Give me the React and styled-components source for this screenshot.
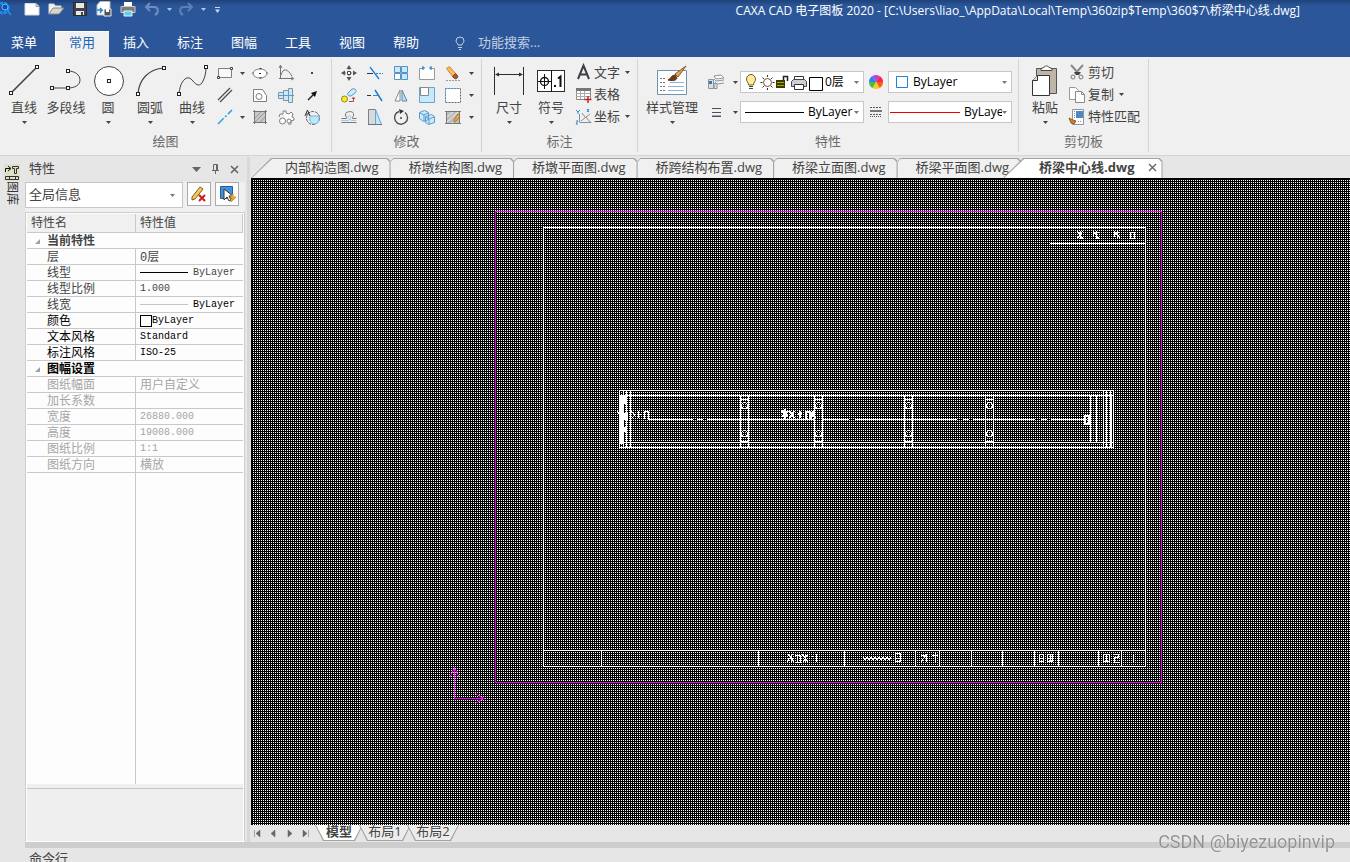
import React, { useState } from 'react'
import styled, { createGlobalStyle, css } from 'styled-components'

const GlobalStyle = createGlobalStyle`
	* {
		box-sizing: border-box;
	}

	body {
		margin: 0;
		background-color: #e6e6e6;
		font-family: 'Open Sans', 'Noto Sans CJK SC', sans-serif;
		font-size: 13px;
		color: #444;
		overflow: hidden;
	}

	button,
	input,
	select {
		font: inherit;
		color: inherit;
		border: none;
		padding: 0;
		margin: 0;
		background: none;
	}

	svg {
		display: block;
		flex: none;
	}
`

const Page = styled.div`
	display: flex;
	flex-direction: column;
	height: 100vh;
`

const TopBar = styled.header`
	background: linear-gradient(#1f4279, #2b579a 6px);
	color: #fff;
`

const TitleRow = styled.div`
	display: flex;
	justify-content: space-between;
	height: 31px;
	padding-right: 50px;
`

const QuickAccess = styled.div`
	display: flex;
	align-items: center;
	height: 18px;
`

const QuickButton = styled.button`
	display: flex;
	align-items: center;
	justify-content: center;
	width: ${({ $width }) => $width || 24}px;
	height: 18px;
`

const Title = styled.h1`
	margin: 0;
	font-size: 12px;
	font-weight: 400;
	line-height: 22px;
	white-space: nowrap;
`

const MenuRow = styled.nav`
	display: flex;
	height: 26px;
`

const MenuTab = styled.button`
	width: 54px;
	padding-bottom: 4px;
	line-height: 20px;
	text-align: center;

	&:first-child {
		width: 55px;
		padding-right: 7px;
	}

	${({ $active }) =>
		$active &&
		css`
			background-color: #f0f0f0;
			color: #1c66b8;
			box-shadow: inset 1px 1px #fff;
		`}
`

const Search = styled.label`
	display: flex;
	align-items: center;
	gap: 12px;
	padding: 0 0 2px 21px;
`

const SearchInput = styled.input`
	width: 120px;
	padding-bottom: 2px;
	outline: none;

	&::placeholder {
		color: #c2cfe3;
		opacity: 1;
	}
`

const Ribbon = styled.div`
	display: flex;
	padding: 2px 0 3px;
	background-color: #f0f0f0;
	border-bottom: 1px solid #d4d4d4;
`

const Group = styled.section`
	flex: none;
	width: ${({ $width }) => $width}px;
	padding-top: 3px;
	border-right: 1px solid #d4d4d4;
`

const GroupBody = styled.div`
	display: flex;
	height: 66px;
	padding-left: ${({ $left }) => $left}px;
`

const GroupTitle = styled.div`
	margin-top: 4px;
	line-height: 18px;
	padding-bottom: 2px;
	text-align: center;
	color: #6a6a6a;
`

const BigButton = styled.button`
	display: flex;
	flex-direction: column;
	align-items: center;
	width: ${({ $width }) => $width || 42}px;
	line-height: 18px;
	white-space: nowrap;

	svg:first-child {
		margin: 2px 0;
	}
`

const CaretBox = styled.span`
	display: flex;
	align-items: center;
	justify-content: center;
	height: 12px;
`

const ToolGrid = styled.div`
	display: grid;
	grid-template-columns: ${({ $columns }) => $columns};
	grid-auto-rows: 22px;
`

const ToolButton = styled.button`
	display: flex;
	align-items: center;
	justify-content: center;
`

const TextTools = styled.div`
	display: flex;
	flex-direction: column;
`

const TextTool = styled.button`
	display: flex;
	align-items: center;
	height: 22px;
	padding-bottom: 2px;
	line-height: 20px;
	white-space: nowrap;
`

const TextToolIcon = styled.span`
	display: flex;
	justify-content: center;
	width: 22px;
`

const TextToolCaret = styled.span`
	display: flex;
	justify-content: center;
	width: 14px;
`

const PropGrid = styled.div`
	display: grid;
	grid-template-columns: 28px 10px 124px 24px 124px;
	grid-auto-rows: 22px;
	row-gap: 8px;
	padding-top: 9px;
`

const SelectBox = styled.label`
	display: flex;
	align-items: center;
	padding: 0 4px 0 ${({ $left }) => $left || 4}px;
	background-color: #fff;
	border: 1px solid #c6c6c6;
	color: #000;
	font-size: 12px;
	overflow: hidden;
`

const Select = styled.select`
	appearance: none;
	flex: 1;
	min-width: 0;
	padding-left: ${({ $left }) => $left || 0}px;
	padding-bottom: 2px;
	height: 20px;
	outline: none;
	text-overflow: clip;
`

const Body = styled.div`
	display: flex;
	flex: 1;
	min-height: 0;
	padding-top: 1px;
`

const SideStrip = styled.aside`
	width: 25px;
	flex: none;
`

const SideTab = styled.button`
	display: flex;
	flex-direction: column;
	align-items: center;
	width: 24px;
	padding-top: 7px;
	font-size: 12px;
`

const SideTabText = styled.span`
	writing-mode: vertical-rl;
	text-orientation: sideways;
	line-height: 16px;
	color: #333;
`

const Panel = styled.aside`
	display: flex;
	flex-direction: column;
	flex: none;
	width: 220px;
`

const PanelHead = styled.div`
	display: flex;
	align-items: center;
	height: 25px;
	padding: 0 1px 4px 4px;
	line-height: 20px;
`

const PanelTitle = styled.h2`
	flex: 1;
	margin: 0;
	font-size: 13px;
	font-weight: 400;
`

const HeadButton = styled.button`
	display: flex;
	justify-content: center;
	width: 19px;
	padding-top: 2px;
`

const PanelTools = styled.div`
	display: flex;
	gap: 4px;
	height: 30px;
	padding-bottom: 4px;
	background-color: #f0f0f0;
`

const PanelSelect = styled.label`
	display: flex;
	align-items: center;
	flex: 1;
	padding: 0 7px 0 3px;
	background-color: #fff;
	border: 1px solid #c6c6c6;
`

const SquareButton = styled.button`
	display: flex;
	align-items: center;
	justify-content: center;
	width: 24px;
	height: 24px;
	border: 1px solid #ababab;
	background-color: #fdfdfd;

	&:last-child {
		margin-right: 6px;
	}
`

const PropertySheet = styled.div`
	display: flex;
	flex-direction: column;
	flex: 1;
	padding: 1px 1px 0;
	background-color: #fdfdfd;
	border: 1px solid #cfcfcf;
	border-bottom-color: #fff;
`

const PropTable = styled.table`
	width: 100%;
	table-layout: fixed;
	border-spacing: 0;
	font-family: 'Liberation Mono', 'Noto Sans CJK SC', monospace;
	font-size: 12px;
	line-height: 15px;

	col:first-child {
		width: 109px;
	}

	th,
	td {
		height: 16px;
		padding: 0 0 0 4px;
		border-bottom: 1px solid #c9c9c9;
		font-weight: 400;
		text-align: left;
		white-space: nowrap;
	}

	thead th {
		height: 19px;
		padding-top: 3px;
		background-color: #f0f0f0;
		border-right: 1px solid #c9c9c9;
		line-height: 15px;
	}

	tbody th {
		padding: 3px 0 0 20px;
		border-right: 1px solid #c9c9c9;
		line-height: 12px;
	}
`

const PropRow = styled.tr`
	color: ${({ $tone }) => ({ off: '#a6a6a6', dark: '#000' })[$tone] || '#444'};
`

const SectionRow = styled.tr`
	color: ${({ $dark }) => ($dark ? '#000' : '#444')};

	tbody & th {
		padding-left: 6px;
		border-right: none;
		font-weight: 700;
	}
`

const SectionName = styled.span`
	display: flex;
	align-items: center;
	gap: 6px;
`

const Value = styled.span`
	display: flex;
	align-items: center;
	gap: ${({ $gap }) => $gap || 0}px;
	font-size: 10px;
	color: ${({ $strong }) => ($strong ? '#000' : 'inherit')};

	${({ $cjk }) =>
		$cjk &&
		css`
			padding-top: 3px;
			font-size: 12px;
			line-height: 12px;
		`}
`

const ColorChip = styled.span`
	width: 12px;
	height: 12px;
	border: 1px solid #000;
	background-color: #fff;
`

const LineSample = styled.span`
	flex: none;
	width: ${({ $width }) => $width}px;
	height: 1px;
	background-color: ${({ $color }) => $color || '#000'};
`

const SheetFiller = styled.div`
	flex: 1;
	width: 109px;
	border-right: 1px solid #c9c9c9;
`

const HelpBox = styled.div`
	height: 57px;
	background-color: #efefef;
	border-top: 4px solid #efefef;
	box-shadow: inset 0 1px #c4c4c4;
`

const Splitter = styled.div`
	flex: none;
	width: 3px;
	margin: 0 1px 0 2px;
	background-color: #d8d8d8;
`

const Workspace = styled.main`
	display: flex;
	flex-direction: column;
	flex: 1;
	min-width: 0;
`

const FileTabs = styled.div`
	display: flex;
	height: 21px;
	padding-top: 1px;
`

const FileTab = styled.button`
	position: relative;
	flex: none;
	padding: 0 12px 2px 18px;
	background-color: #a3a3a3;
	clip-path: polygon(0 3px, 3px 0, calc(100% - 3px) 0, 100% 3px, 100% 100%, 0 100%);
	line-height: 16px;
	white-space: nowrap;

	&::before {
		content: '';
		position: absolute;
		inset: 1px 1px 0 0;
		background-color: #f0f0f0;
		clip-path: polygon(0 3px, 3px 0, calc(100% - 3px) 0, 100% 3px, 100% 100%, 0 100%);
	}

	${({ $slant }) =>
		$slant &&
		css`
			padding-left: 34px;
			clip-path: polygon(0 100%, 20px 0, calc(100% - 3px) 0, 100% 3px, 100% 100%);

			&::before {
				left: 1px;
				clip-path: polygon(0 100%, 20px 0, calc(100% - 3px) 0, 100% 3px, 100% 100%);
			}
		`}

	${({ $active }) =>
		$active &&
		css`
			margin-left: -18px;
			padding-left: 36px;
			padding-right: 6px;
			font-weight: 700;

			&::before {
				background-color: #fff;
			}
		`}
`

const FileTabText = styled.span`
	position: relative;
	display: flex;
	align-items: center;
	gap: 13px;
`

const Canvas = styled.svg`
	flex: 1;
	width: 100%;
	min-height: 0;
	background-color: #000;
`

const LayoutTabs = styled.div`
	display: flex;
	height: 16px;
	margin-bottom: 1px;
`

const PageButton = styled.button`
	display: flex;
	align-items: center;
	width: 16px;
	height: 17px;
	padding-left: 2px;
`

const LayoutTab = styled.button`
	position: relative;
	width: ${({ $width }) => $width || 52}px;
	height: 16px;
	margin-right: -4px;
	padding-bottom: 3px;
	background-color: #a3a3a3;
	clip-path: polygon(0 0, 100% 0, calc(100% - 8px) 100%, 8px 100%);
	line-height: 13px;
	font-weight: ${({ $active }) => ($active ? 700 : 400)};

	&::before {
		content: '';
		position: absolute;
		inset: 0 1px 1px;
		background-color: ${({ $active }) => ($active ? '#fff' : '#ececec')};
		clip-path: polygon(0 0, 100% 0, calc(100% - 8px) 100%, 8px 100%);
	}

	span {
		position: relative;
	}
`

const BottomBar = styled.div`
	height: 6px;
	margin-left: 25px;
	background-color: #cdcdcd;
`

const CommandRow = styled.footer`
	height: 14px;
	padding-left: 29px;
	line-height: 20px;
	overflow: hidden;
`

const Watermark = styled.div`
	position: fixed;
	right: 15px;
	bottom: 9px;
	font-family: Roboto, sans-serif;
	font-size: 18px;
	line-height: 22px;
	color: #929292;
	text-shadow: 0 0 1px #fff;
`

const Icon = ({ w = 18, h = w, children }) => (
	<svg width={w} height={h} viewBox={`0 0 ${w} ${h}`} fill='none' stroke='#7b7f86' aria-hidden='true'>
		{children}
	</svg>
)

const Caret = ({ color = '#444' }) => (
	<Icon w={5} h={3}>
		<path d='M0 0h5L2.500 3z' fill={color} stroke='none' />
	</Icon>
)

const Node = ({ x, y }) => <rect x={x - 1.5} y={y - 1.5} width='3' height='3' fill='#fff' stroke='#222' />

const big = {
	line: (
		<Icon w={32}>
			<path d='M3 29L29 3' stroke='#3f4248' strokeWidth='1.600' />
			<Node x={3} y={29} />
			<Node x={29} y={3} />
		</Icon>
	),
	polyline: (
		<Icon w={32}>
			<path d='M2 24h16c7 0 12-3 12-8s-5-9-12-9' stroke='#3f4248' />
			<Node x={2} y={24} />
			<Node x={18} y={24} />
			<Node x={18} y={7} />
		</Icon>
	),
	circle: (
		<Icon w={32}>
			<circle cx='17' cy='17' r='14.500' fill='#fff' stroke='#3f4248' />
			<Node x={17} y={17} />
		</Icon>
	),
	arc: (
		<Icon w={32}>
			<path d='M4 30C5 15 15 5 30 4' stroke='#3f4248' strokeWidth='1.200' />
			<Node x={4} y={30} />
			<Node x={30} y={4} />
		</Icon>
	),
	curve: (
		<Icon w={32}>
			<path d='M3 30C4 17 11 10 16 16s8 7 11 1c2-4 3-8 3-14' stroke='#3f4248' />
			<Node x={3} y={30} />
			<Node x={30} y={3} />
		</Icon>
	),
	size: (
		<Icon w={32}>
			<path d='M1.500 3v28M30.500 3v28M3 10.500h26' stroke='#2a2d35' />
			<path d='M2 10.500l4-2v4zM30 10.500l-4-2v4z' fill='#2a2d35' stroke='none' />
		</Icon>
	),
	symbol: (
		<Icon w={32}>
			<rect x='2.500' y='6.500' width='27' height='21' fill='#fff' stroke='#2a2d35' />
			<path d='M16.500 6v22M9.500 10v15M3 17.500h13' stroke='#111' />
			<circle cx='9.500' cy='17.500' r='4' stroke='#111' strokeWidth='1.300' />
			<path d='M19 22h2M23 14.500l2.500-2V23' stroke='#111' strokeWidth='2' />
		</Icon>
	),
	style: (
		<Icon w={32}>
			<path d='M1.500 6.500h29v24h-29z' fill='#fff' stroke='#6f93ac' />
			<path d='M4 14.500h6M4 18.500h5M4 22.500h5M4 26.500h5' stroke='#777' strokeDasharray='2 1' />
			<path d='M14 18.500h14M12 22.500h16M12 26.500h16' stroke='#8db4d3' />
			<path d='M19 10l3 3 8-11z' fill='#e1a65b' stroke='#8a5625' />
			<path d='M12 16c3-1 3-5 7-5l2 3c-1 3-5 3-9 2z' fill='#6e3c17' stroke='#5d3213' />
		</Icon>
	),
	paste: (
		<Icon w={32}>
			<path d='M7.500 4.500h20v25h-20z' fill='#beb4a7' stroke='#555' />
			<path d='M12 6.500v-2l3-1c0-2 5-2 5 0l3 1v2z' fill='#fff' stroke='#444' />
			<path d='M3.500 16.500l5-5h12v20h-17z' fill='#fff' stroke='#333' />
			<path d='M8.500 11.500v5h-5' fill='#ddd' stroke='#333' />
		</Icon>
	),
}

const draw = {
	rect: (
		<Icon>
			<path d='M2.500 4.500h13v9h-13z' fill='#f9f9f9' />
			<path d='M1.500 12.500h2v2h-2zM14.500 3.500h2v2h-2z' fill='#fff' stroke='#444' />
		</Icon>
	),
	ellipse: (
		<Icon>
			<ellipse cx='9' cy='9.500' rx='7' ry='4.500' fill='#fff' />
			<path d='M8.500 4.500h2M1.500 9h1M15.500 9h1M8.500 14h2M8 9.500h2' stroke='#333' />
		</Icon>
	),
	graph: (
		<Icon>
			<path d='M3.500 2v13M2 14.500h14M4 11c2-7 6-7 11 1' stroke='#71757b' />
			<path d='M2 4l1.500-3L5 4M14 13l3 1.500L14 16' />
		</Icon>
	),
	point: (
		<Icon>
			<path d='M8 8h2v2H8z' fill='#444' stroke='none' />
		</Icon>
	),
	parallel: (
		<Icon>
			<path d='M2 14L14 2M4 16L16 4' stroke='#4a4d52' strokeWidth='1.300' />
		</Icon>
	),
	shape: (
		<Icon>
			<path d='M2.500 3.500h9l4 6v6h-13z' fill='#fff' />
			<circle cx='8' cy='10.500' r='3' />
		</Icon>
	),
	shaft: (
		<Icon>
			<path d='M1.500 6.500h5v6h-5zM6.500 4.500h5v10h-5zM11.500 2.500h4v14h-4z' fill='#cbe8fa' stroke='#8093a5' />
			<path d='M1 9.500h16' stroke='#5b9bd0' />
		</Icon>
	),
	arrow: (
		<Icon>
			<path d='M5 14l6-6' stroke='#222' strokeWidth='1.500' />
			<path d='M14 5l-2 6-4-4z' fill='#111' stroke='none' />
		</Icon>
	),
	centerLine: (
		<Icon>
			<path d='M2 16L16 2' stroke='#29a2e3' strokeWidth='1.500' strokeDasharray='8 2 2 2' />
		</Icon>
	),
	hatch: (
		<Icon>
			<path d='M3.500 3.500h11v11h-11z' fill='#c6c9cc' />
			<path d='M2 3.500h14M2 14.500h14M3.500 2v14M14.500 2v14' stroke='#777' />
			<path d='M4 10l6-6M4 14L14 4M9 14l5-5' stroke='#999' />
		</Icon>
	),
	gear: (
		<Icon>
			<path d='M6 3h3v2l3 1 2-2 2 2-1 3 2 1v2l-3 1v3h-3M6 3v3L3 6 2 9' fill='#fff' />
			<circle cx='5.500' cy='13' r='3' fill='#fff' />
			<circle cx='12' cy='13' r='2' fill='#fff' />
		</Icon>
	),
	partCircle: (
		<Icon>
			<circle cx='10' cy='10' r='6.500' stroke='#555' strokeDasharray='3 1' />
			<path d='M7 8h9v3c0 3-2 5-5 5s-5-4-4-8z' fill='#bfe6fb' stroke='#74b6dc' />
			<path d='M2 8l2.500-6L7 8M3 6h3' stroke='#333' />
		</Icon>
	),
}

const modify = {
	move: (
		<Icon>
			<path d='M9 1L6.500 5h5zM9 17l-2.500-4h5zM1 9l4-2.500v5zM17 9l-4-2.500v5z' fill='#53575d' stroke='none' />
			<path d='M9 5v8M5 9h8' stroke='#777' strokeDasharray='1 1' />
			<path d='M7.500 7.500h3v3h-3z' fill='#fff' stroke='#444' />
		</Icon>
	),
	trim: (
		<Icon>
			<path d='M1 9.500h6' stroke='#333' />
			<path d='M10 9.500h7' stroke='#2b8bd6' strokeDasharray='2 1' />
			<path d='M4 3l9 12' stroke='#1b7fd4' strokeWidth='1.300' />
		</Icon>
	),
	array: (
		<Icon>
			<path d='M2.500 2.500h6v6h-6zM9.500 2.500h6v6h-6zM9.500 9.500h6v6h-6z' fill='#c7e9fc' stroke='#5593c3' />
			<path d='M2.500 9.500h6v6h-6z' fill='#fff' stroke='#5593c3' />
		</Icon>
	),
	stretch: (
		<Icon>
			<path d='M6 4.500H1.500v11h15v-11H12' fill='#fff' stroke='#999' />
			<path d='M5 2v4M13 2v4M4 4h3M11 4h3' stroke='#2081d3' />
		</Icon>
	),
	erase: (
		<Icon>
			<path d='M2.500 4.500l3-2 6 7-3 3z' fill='#f8bc57' stroke='#c88a2b' />
			<path d='M8.500 12.500l3-3 2 2c1 2-1 4-3 3z' fill='#a8583c' stroke='#7c3b25' />
			<path d='M2 16.500h14' stroke='#999' strokeDasharray='2 1' />
		</Icon>
	),
	copyMove: (
		<Icon>
			<path d='M8 7l4-4c4-1 5 2 3 4l-4 3c-3 0-4-1-3-3z' fill='#cdebfb' stroke='#4c9ac9' />
			<circle cx='4.500' cy='13' r='3' fill='#fdeb1b' stroke='#8c8a2a' />
			<path d='M9 15.500h4.500V12M12 13l1.500-2 1.500 2' stroke='#b04a4a' />
		</Icon>
	),
	extend: (
		<Icon>
			<path d='M1 9.500h5' stroke='#333' strokeDasharray='4 1' />
			<path d='M7 9.500h6' stroke='#2b8bd6' />
			<path d='M9 4l7 11' stroke='#1b7fd4' strokeWidth='1.500' />
		</Icon>
	),
	mirror: (
		<Icon>
			<path d='M8 4v11H3z' fill='#fff' stroke='#888' />
			<path d='M10 4v11h5z' fill='#b9dff5' stroke='#5a8cb0' />
		</Icon>
	),
	scale: (
		<Icon>
			<path d='M1.500 1.500h15v15h-15z' fill='#c7e9fc' stroke='#64a6d2' />
			<path d='M2.500 1.500h8v8h-8z' fill='#fff' stroke='#888' />
		</Icon>
	),
	boundary: (
		<Icon>
			<path d='M1.500 2.500h15v14h-15z' fill='#fff' stroke='#666' strokeDasharray='2 1' />
			<path d='M1.500 2v14M1 2.500h15' stroke='#449bda' strokeDasharray='2 1' />
		</Icon>
	),
	offset: (
		<Icon>
			<path d='M1.500 10.500h5c1-1-2-3-1-5s7-3 8 0-2 4-1 5h4' stroke='#777' />
			<path d='M1.500 14.500h15' stroke='#777' />
			<path d='M1 12.500h7c2 0 1-2 0-3-1-2 3-3 3 0-1 1-1 3 1 3h4' stroke='#9ccbe8' />
		</Icon>
	),
	taper: (
		<Icon>
			<path d='M2.500 1.500h7v15h-7z' fill='#d7dadd' />
			<path d='M9.500 1.500l6 15h-6z' fill='#bfe7fa' stroke='#68a6cf' />
			<path d='M2 16.500h14' stroke='#6d7379' />
		</Icon>
	),
	rotate: (
		<Icon>
			<path d='M13 4.500A6.500 6.500 0 1 1 7 3.500' stroke='#4b4e54' strokeWidth='1.400' />
			<path d='M7 1l5 2-4 3z' fill='#333' stroke='none' />
			<circle cx='9' cy='10' r='1' fill='#444' stroke='none' />
		</Icon>
	),
	block: (
		<Icon>
			<path d='M1.500 4.500l5-2 4 2v7l-5 2-4-3zM7.500 8.500l6-2 3 2v6l-6 2-3-2z' fill='#cdeafb' stroke='#579bcb' />
			<path d='M2 5l4 2 4-2M6 7v6M8 9l3 2 5-2M11 11v5' stroke='#579bcb' />
		</Icon>
	),
	hatchEdit: (
		<Icon>
			<path d='M2.500 3.500h13v12h-13z' fill='#bdbdbd' stroke='#777' />
			<path d='M1 3.500h16M1 15.500h16' stroke='#777' />
			<path d='M3 9l6-5M3 14L14 4M8 15l7-6' stroke='#eee' />
			<path d='M10 12l4-6 2 2-4 5-2 1z' fill='#f4ad40' stroke='#a9742e' />
		</Icon>
	),
}

const small = {
	text: (
		<Icon>
			<path d='M4 16L9.500 2.500 15 16M6 11.500h7' stroke='#3c3f45' strokeWidth='2' />
		</Icon>
	),
	table: (
		<Icon>
			<path d='M2.500 3.500h14v11h-14z' fill='#fff' stroke='#888' />
			<path d='M2 4.500h15' stroke='#777' strokeWidth='3' />
			<path d='M2 8.500h14M2 11.500h14M6.500 6v8M10.500 6v8' stroke='#aaa' />
			<path d='M14 11v7M10.500 14.500h7' stroke='#c2222a' strokeWidth='1.500' />
		</Icon>
	),
	coord: (
		<Icon>
			<path d='M5.500 15.500h12M5.500 15V7M7 14l5-4 4 5M11 10L8 6M12 10l4-3' stroke='#8a8d92' />
			<path d='M2 3l2 2 2-2M4 5v2M13 2l2 3M15 2l-2 3M2 14h2l-2 3h2' stroke='#2b8bd6' />
		</Icon>
	),
	cut: (
		<Icon>
			<path d='M3 2l8 9M15 2L7 11' stroke='#888' strokeWidth='2' />
			<path d='M6 9h7l-2 3H8z' fill='#444' stroke='none' />
			<circle cx='5' cy='14' r='2' stroke='#777' />
			<circle cx='13' cy='14' r='2' stroke='#777' />
		</Icon>
	),
	copy: (
		<Icon>
			<path d='M1.500 2.500h6l3 3v9h-9z' fill='#fff' stroke='#999' />
			<path d='M7.500 6.500h6l3 3v8h-9z' fill='#fff' stroke='#888' />
			<path d='M13.500 6.500v3h3' stroke='#888' />
		</Icon>
	),
	match: (
		<Icon>
			<path d='M4.500 2.500h11v15h-11z' fill='#fff' stroke='#8b97a5' />
			<path d='M8 4h7v7H8z' fill='#4d88be' stroke='none' />
			<path d='M6.500 4v7M10 14.500h4' stroke='#889' strokeDasharray='1 1' />
			<path d='M1 11l4 2 3 1-2 3-3-1z' fill='#c9803a' stroke='#9a5a1c' />
		</Icon>
	),
	layers: (
		<Icon>
			<path d='M7 3l7-1 3 3-8 1zM7 6l2 2 8-1M8 9l2 2 7-1' fill='#fff' stroke='#8c949c' />
			<path d='M1.500 6.500h5v9h-5zM7 10.500h3v5H7z' fill='#ddd' stroke='#8c949c' />
			<path d='M2 8h3v3H2z' fill='#3a77b4' stroke='none' />
		</Icon>
	),
	weight: (
		<Icon>
			<path d='M5 5.500h9M5 9.500h9M5 13.500h9' stroke='#4b4e5c' />
			<path d='M5 12.500h9' stroke='#a5a7ae' />
		</Icon>
	),
	wheel: (
		<Icon w={16}>
			<g stroke='none'>
				<path d='M8 8L4.500 2A7 7 0 0 1 11.500 2z' fill='#c03be0' />
				<path d='M8 8l3.500-6A7 7 0 0 1 15 8z' fill='#ef2b4b' />
				<path d='M8 8h7a7 7 0 0 1-3.500 6z' fill='#ff5a12' />
				<path d='M8 8l3.500 6a7 7 0 0 1-7 0z' fill='#f8c822' />
				<path d='M8 8l-3.500 6A7 7 0 0 1 1 8z' fill='#43bd3c' />
				<path d='M8 8H1a7 7 0 0 1 3.500-6z' fill='#2f7ff0' />
			</g>
		</Icon>
	),
	linetype: (
		<Icon w={14}>
			<path d='M1 2.500h12M1 9.500h12' stroke='#555' strokeDasharray='2 1' />
			<path d='M1 5.500h12M1 6.500h12' stroke='#777' />
			<path d='M1 11.500h12' stroke='#555' strokeDasharray='1 1' />
		</Icon>
	),
	layerState: (
		<Icon w={80} h={20}>
			<path d='M1.500 7a4.500 4.500 0 0 1 9 0c0 3-2 3-2 6h-5c0-3-2-3-2-6z' fill='#ffeb9e' stroke='#6b5b25' />
			<path d='M4 14.500h4M4 16.500h4' stroke='#444' />
			<circle cx='22.500' cy='10.500' r='4' stroke='#7d4e33' fill='#fff' />
			<path d='M22.500 3v2M22.500 16v2M15.500 10.500h2M27.500 10.500h2M17.500 5.500l1.500 1.500M27.500 5.500L26 7M17.500 15.500l1.500-1.500M27.500 15.500L26 14' stroke='#333' />
			<path d='M31 8h9v8h-9z' fill='#3b3b00' stroke='none' />
			<path d='M32 10.500h7M32 13.500h7' stroke='#a9a900' />
			<path d='M38.500 8V4.500h4V9' stroke='#222' strokeWidth='1.500' />
			<path d='M49.500 8V4.500h9V8' fill='#fff' stroke='#333' />
			<path d='M46.500 9.500l2-2h11l2 2v5h-15z' fill='#ccd0d4' stroke='#444' />
			<path d='M49.500 12.500h9v5h-9z' fill='#fff' stroke='#333' />
			<path d='M64.500 5.500h13v13h-13z' fill='#fff' stroke='#000' />
		</Icon>
	),
	blueBox: (
		<Icon>
			<path d='M3.500 3.500h11v11h-11z' fill='#fff' stroke='#1f7fd1' />
		</Icon>
	),
}

const quick = [
	{
		name: '新建',
		icon: (
			<Icon>
				<path d='M2 3.500h11l3 3V15H2z' fill='#fff' stroke='#d9d9d9' />
				<path d='M13 3.500v3h3' stroke='#999' />
			</Icon>
		),
	},
	{
		name: '打开',
		icon: (
			<Icon>
				<path d='M2 14V4h5l1 2h6v3' fill='#f3f3f3' stroke='#ddd' />
				<path d='M2 14l4-6h11l-5 6z' fill='#d8d5cc' stroke='#888' />
			</Icon>
		),
	},
	{
		name: '保存',
		icon: (
			<Icon>
				<path d='M2.500 2.500h13v13h-13z' fill='#3f4247' stroke='#2c2c2c' />
				<path d='M5 3h8v5H5zM5 11h8v4H5z' fill='#e9e9e9' stroke='none' />
				<path d='M10 12h2v3h-2z' fill='#444' stroke='none' />
			</Icon>
		),
	},
	{
		name: '另存为',
		icon: (
			<Icon>
				<path d='M5 1.500h10V15H2V5z' fill='#fff' stroke='#bbb' />
				<path d='M2 10h5l-2-2M7 10l-2 3' stroke='#1c86d6' strokeWidth='1.500' />
				<path d='M9 9h7v7H9z' fill='#555' stroke='#eee' />
				<path d='M11 9h3v3h-3z' fill='#fff' stroke='none' />
			</Icon>
		),
	},
	{
		name: '打印',
		icon: (
			<Icon>
				<path d='M5 2h8v5H5z' fill='#fff' stroke='none' />
				<path d='M2 6.500h14v6H2z' fill='#797c80' stroke='#ccc' />
				<path d='M5 11h8v5H5z' fill='#5bd0ee' stroke='#eee' />
			</Icon>
		),
	},
	{
		name: '撤销',
		icon: (
			<Icon>
				<path d='M3 7h8c5 0 5 6 1 8M7 3L3 7l4 4' stroke='#6e8cbf' strokeWidth='2' />
			</Icon>
		),
		caret: true,
	},
	{
		name: '重做',
		icon: (
			<Icon>
				<path d='M15 7H7c-5 0-5 6-1 8M11 3l4 4-4 4' stroke='#5c7fb8' strokeWidth='2' />
			</Icon>
		),
		caret: true,
	},
]

const menus = ['菜单', '常用', '插入', '标注', '图幅', '工具', '视图', '帮助']

const files = ['内部构造图.dwg', '桥墩结构图.dwg', '桥墩平面图.dwg', '桥跨结构布置.dwg', '桥梁立面图.dwg', '桥梁平面图.dwg', '桥梁中心线.dwg']

const currentProps = [
	{ name: '层', value: <Value $cjk>0层</Value> },
	{
		name: '线型',
		value: (
			<Value $gap={5}>
				<LineSample $width={48} />
				ByLayer
			</Value>
		),
	},
	{ name: '线型比例', value: <Value>1.000</Value> },
	{
		name: '线宽',
		value: (
			<Value $gap={5} $strong>
				<LineSample $width={48} $color='#c4c4c4' />
				ByLayer
			</Value>
		),
	},
	{
		name: '颜色',
		tone: 'dark',
		value: (
			<Value>
				<ColorChip />
				ByLayer
			</Value>
		),
	},
	{ name: '文本风格', tone: 'dark', value: <Value>Standard</Value> },
	{ name: '标注风格', tone: 'dark', value: <Value>ISO-25</Value> },
]

const sheetProps = [
	{ name: '图纸幅面', value: <Value $cjk>用户自定义</Value> },
	{ name: '加长系数', value: null },
	{ name: '宽度', value: <Value>26880.000</Value> },
	{ name: '高度', value: <Value>19008.000</Value> },
	{ name: '图纸比例', value: <Value>1:1</Value> },
	{ name: '图纸方向', value: <Value $cjk>横放</Value> },
]

const Big = ({ icon, label, width, caret = true }) => (
	<BigButton type='button' $width={width}>
		{big[icon]}
		{label}
		{caret && (
			<CaretBox>
				<Caret />
			</CaretBox>
		)}
	</BigButton>
)

const Tool = ({ label, children }) => (
	<ToolButton type='button' aria-label={label}>
		{children}
	</ToolButton>
)

const LabelTool = ({ icon, label, caret }) => (
	<TextTool type='button'>
		<TextToolIcon>{small[icon]}</TextToolIcon>
		{label}
		{caret && (
			<TextToolCaret>
				<Caret />
			</TextToolCaret>
		)}
	</TextTool>
)

const Section = ({ title, dark }) => (
	<SectionRow $dark={dark}>
		<th colSpan={2} scope='colgroup'>
			<SectionName>
				<Icon w={8}>
					<path d='M7 1v5H2z' fill='#a0a0a0' stroke='none' />
				</Icon>
				{title}
			</SectionName>
		</th>
	</SectionRow>
)

const piers = [489, 563, 653, 734]
const cellLines = [350, 507, 593, 664, 688, 720, 751, 783, 807, 847, 870]

const Drawing = () => (
	<Canvas shapeRendering='crispEdges' aria-label='桥梁中心线'>
		<defs>
			<pattern id='dots' width='2' height='2' patternUnits='userSpaceOnUse'>
				<rect x='0' y='0' width='1' height='1' fill='#fff' />
			</pattern>
		</defs>
		<rect x='1' y='1' width='100%' height='100%' fill='url(#dots)' />

		<g fill='none' stroke='#f0f'>
			<path d='M244.500 33.500h666v471h-666z' />
			<path d='M203.500 490v30.500h30M199 499l4.500-9 4.500 9M224 515.500l9 5-9 5' />
		</g>

		<g fill='none' stroke='#fff'>
			<path d='M292.500 49.500h602v439h-602z' />
			<path d='M292 472.500h602M799 65.500h95' />
			{cellLines.map((x) => (
				<path key={x} d={`M${x}.500 472v16`} />
			))}

			<path d='M368 212.500h495M368 217.500h495M368 264.500h495M368 269.500h495' />
			<path d='M397 241.500h45M446 241.500h6M456 241.500h107M571 241.500h27M604 241.500h102M712 241.500h6M722 241.500h62M790 241.500h6M800 241.500h36' />
			<path d='M368.500 213v56M372.500 213v56M375.500 213v56M379.500 213v56M839.500 217v48M845.500 217v48M852.500 213v56M855.500 213v56M859.500 213v56M862.500 213v56' />
			<path d='M369 217h5v8h-3v10h5v6h-5v8h4v4h-4v12h-2z' fill='#fff' />
			<path d='M860.500 217v51' />
			<path d='M366 232l3 6 3 4' />
			{piers.map((x) => (
				<g key={x}>
					<path d={`M${x}.500 217v52M${x + 8}.500 217v52M${x} 221.500h8M${x} 263.500h8`} />
					<circle cx={x + 4.5} cy='227.500' r='3' />
					<circle cx={x + 4.5} cy='255.500' r='3' />
				</g>
			))}
			<rect x='833.500' y='237.500' width='4' height='8' strokeWidth='2' />
			<path d='M380 233l4 4-4 4M387.500 233v7M386 236h5M393.500 233.500h4v7M393.500 233v8' />
			<path d='M531 233l6 6M537 233l-6 6M534 231v10M539 233l4 7M543 233l-4 7M548.500 233v7M547 236h4M554.500 241v-7h4v7M562 233l-2 8M561 234l3 6' strokeWidth='2' />
		</g>

		<g fill='none' stroke='#fff'>
			<path d='M826 53l6 8M832 53l-6 8M842 53l6 8M848 54h-6v5M863 53l6 7M869 54h-6v5M879.500 54.500h4v6h-4z' />
			<path d='M829.500 53v8M845 53v8M866.500 53v8M537 480h6M540 476v8M554 476v8M546.500 477v8' />
			<path d='M537 476l6 8M542 476l-6 8M544 477h5v7h-5M551 476l6 8M557 476l-5 8M560 478h3M565.500 476v8' />
			<path d='M612 479l2 3 2-3 2 3 2-3 2 3 2-3 2 3 2-3 2 3 2-3 2 3 2-3 2 3 2-3M644.500 475.500h5v8h-5zM644 480h5M670 477h5v7M676 476l-6 8M681 477h6M684.500 475v9' />
			<path d='M788.500 476.500h4v7h-4zM788 480h5M796.500 476.500h5v7h-5zM796 480h6M799 476v8M852.500 476.500h6v7h-6zM855.500 476v8M863 476h4v3h-4v5h5M882.500 476v8' />
		</g>
	</Canvas>
)

const App = () => {
	const [menu, setMenu] = useState('常用')
	const [file, setFile] = useState('桥梁中心线.dwg')
	const [layout, setLayout] = useState('模型')

	return (
		<>
			<GlobalStyle />
			<Page>
				<TopBar>
					<TitleRow>
						<QuickAccess>
							<Icon w={20}>
								<circle cx='3' cy='9' r='5' stroke='#1e8df0' strokeWidth='3' strokeDasharray='3 1' />
								<circle cx='5' cy='8' r='3' fill='#0e4fb5' stroke='#5fc0ff' />
								<path d='M7 11l4 5' stroke='#1e8df0' strokeWidth='2' />
							</Icon>
							{quick.map(({ name, icon, caret }) => (
								<React.Fragment key={name}>
									<QuickButton type='button' aria-label={name}>
										{icon}
									</QuickButton>
									{caret && (
										<QuickButton type='button' $width={10} aria-label={name + '列表'}>
											<Caret color='#b8c7df' />
										</QuickButton>
									)}
								</React.Fragment>
							))}
							<QuickButton type='button' $width={18} aria-label='自定义'>
								<Icon w={7}>
									<path d='M1 1.500h5' stroke='#ccd6e8' />
									<path d='M1 3.500h5L3.500 7z' fill='#ccd6e8' stroke='none' />
								</Icon>
							</QuickButton>
						</QuickAccess>
						<Title>CAXA CAD 电子图板 2020 - [C:\Users\liao_\AppData\Local\Temp\360zip$Temp\360$7\桥梁中心线.dwg]</Title>
					</TitleRow>
					<MenuRow>
						{menus.map((name) => (
							<MenuTab key={name} type='button' $active={name === menu} onClick={() => setMenu(name)}>
								{name}
							</MenuTab>
						))}
						<Search>
							<Icon w={12} h={14}>
								<path d='M4 9c0-2-2-2-2-4a4 4 0 0 1 8 0c0 2-2 2-2 4zM4 11.500h4M5 13.500h2' stroke='#c2cfe3' />
							</Icon>
							<SearchInput placeholder='功能搜索...' aria-label='功能搜索' />
						</Search>
					</MenuRow>
				</TopBar>

				<Ribbon>
					<Group $width={332}>
						<GroupBody $left={3}>
							<Big icon='line' label='直线' />
							<Big icon='polyline' label='多段线' caret={false} />
							<Big icon='circle' label='圆' />
							<Big icon='arc' label='圆弧' />
							<Big icon='curve' label='曲线' />
							<ToolGrid $columns='24px 10px 26px 26px 26px'>
								<Tool label='矩形'>{draw.rect}</Tool>
								<Tool label='矩形列表'>
									<Caret />
								</Tool>
								<Tool label='椭圆'>{draw.ellipse}</Tool>
								<Tool label='公式曲线'>{draw.graph}</Tool>
								<Tool label='点'>{draw.point}</Tool>
								<Tool label='平行线'>{draw.parallel}</Tool>
								<span />
								<Tool label='局部放大'>{draw.shape}</Tool>
								<Tool label='孔/轴'>{draw.shaft}</Tool>
								<Tool label='箭头'>{draw.arrow}</Tool>
								<Tool label='中心线'>{draw.centerLine}</Tool>
								<Tool label='中心线列表'>
									<Caret />
								</Tool>
								<Tool label='剖面线'>{draw.hatch}</Tool>
								<Tool label='齿轮'>{draw.gear}</Tool>
								<Tool label='圆形标记'>{draw.partCircle}</Tool>
							</ToolGrid>
						</GroupBody>
						<GroupTitle>绘图</GroupTitle>
					</Group>

					<Group $width={150}>
						<GroupBody $left={4}>
							<ToolGrid $columns='repeat(5, 26px) 10px'>
								{Object.entries(modify).map(([name, icon], i) => (
									<React.Fragment key={name}>
										<Tool label={name}>{icon}</Tool>
										{i % 5 === 4 && (
											<Tool label={name + ' list'}>
												<Caret />
											</Tool>
										)}
									</React.Fragment>
								))}
							</ToolGrid>
						</GroupBody>
						<GroupTitle>修改</GroupTitle>
					</Group>

					<Group $width={156}>
						<GroupBody $left={6}>
							<Big icon='size' label='尺寸' />
							<Big icon='symbol' label='符号' />
							<TextTools>
								<LabelTool icon='text' label='文字' caret />
								<LabelTool icon='table' label='表格' />
								<LabelTool icon='coord' label='坐标' caret />
							</TextTools>
						</GroupBody>
						<GroupTitle>标注</GroupTitle>
					</Group>

					<Group $width={381}>
						<GroupBody $left={4}>
							<Big icon='style' label='样式管理' width={60} />
							<PropGrid>
								<Tool label='图层'>{small.layers}</Tool>
								<Tool label='图层列表'>
									<Caret />
								</Tool>
								<SelectBox>
									{small.layerState}
									<Select aria-label='当前层'>
										<option>0层</option>
									</Select>
									<Caret color='#777' />
								</SelectBox>
								<Tool label='颜色'>{small.wheel}</Tool>
								<SelectBox>
									{small.blueBox}
									<Select aria-label='当前颜色' $left={2}>
										<option>ByLayer</option>
									</Select>
									<Caret color='#777' />
								</SelectBox>
								<Tool label='线宽'>{small.weight}</Tool>
								<Tool label='线宽列表'>
									<Caret />
								</Tool>
								<SelectBox>
									<LineSample $width={59} />
									<Select aria-label='当前线宽' $left={4}>
										<option>ByLayer</option>
									</Select>
									<Caret color='#777' />
								</SelectBox>
								<Tool label='线型'>{small.linetype}</Tool>
								<SelectBox $left={1}>
									<LineSample $width={70} $color='#e00' />
									<Select aria-label='当前线型' $left={4}>
										<option>ByLayer</option>
									</Select>
									<Caret color='#777' />
								</SelectBox>
							</PropGrid>
						</GroupBody>
						<GroupTitle>特性</GroupTitle>
					</Group>

					<Group $width={130}>
						<GroupBody $left={5}>
							<Big icon='paste' label='粘贴' />
							<TextTools>
								<LabelTool icon='cut' label='剪切' />
								<LabelTool icon='copy' label='复制' caret />
								<LabelTool icon='match' label='特性匹配' />
							</TextTools>
						</GroupBody>
						<GroupTitle>剪切板</GroupTitle>
					</Group>
				</Ribbon>

				<Body>
					<SideStrip>
						<SideTab type='button'>
							<Icon w={16} h={17}>
								<path d='M0 0h16v17H0z' fill='#dfe0c8' stroke='none' />
								<path d='M1.500 8V4.500H6M4 2l3 2.500L4 7' stroke='#111' />
								<path d='M8.500 2.500h6v2h-2v5h-2v-5h-2zM1.500 12.500h13v3h-13zM5.500 12v3M11.500 12v3' stroke='#333' />
							</Icon>
							<SideTabText>图库</SideTabText>
						</SideTab>
					</SideStrip>

					<Panel>
						<PanelHead>
							<PanelTitle>特性</PanelTitle>
							<HeadButton type='button' aria-label='菜单'>
								<Icon w={9} h={10}>
									<path d='M0 3h9L4.500 8z' fill='#666' stroke='none' />
								</Icon>
							</HeadButton>
							<HeadButton type='button' aria-label='固定'>
								<Icon w={9} h={10}>
									<path d='M2.500 6V.500h4V6M5.500 1v5M1 6.500h7M4.500 6v4' stroke='#666' />
								</Icon>
							</HeadButton>
							<HeadButton type='button' aria-label='关闭'>
								<Icon w={9} h={10}>
									<path d='M1 2l7 7M8 2L1 9' stroke='#666' strokeWidth='1.600' />
								</Icon>
							</HeadButton>
						</PanelHead>
						<PanelTools>
							<PanelSelect>
								<Select aria-label='选择集'>
									<option>全局信息</option>
								</Select>
								<Caret color='#777' />
							</PanelSelect>
							<SquareButton type='button' aria-label='取消选择'>
								<Icon>
									<path d='M2 12L10 2l3 2-8 10-3 1z' fill='#f2cc54' stroke='#7d5b28' />
									<path d='M9 10l6 6M15 10l-6 6' stroke='#cf1b1b' strokeWidth='2' />
								</Icon>
							</SquareButton>
							<SquareButton type='button' aria-label='快速选择'>
								<Icon>
									<path d='M2.500 1.500h12v12h-12z' fill='#4192d7' stroke='#225e9c' />
									<path d='M6 4v11l3-3 2 4 2-1-2-4h4z' fill='#fff' stroke='#333' />
									<path d='M15 9l-3 4h3l-2 4 5-5h-3z' fill='#ffc928' stroke='#dd8b18' />
								</Icon>
							</SquareButton>
						</PanelTools>
						<PropertySheet>
							<PropTable>
								<colgroup>
									<col />
									<col />
								</colgroup>
								<thead>
									<tr>
										<th scope='col'>特性名</th>
										<th scope='col'>特性值</th>
									</tr>
								</thead>
								<tbody>
									<Section title='当前特性' />
									{currentProps.map(({ name, value, tone }) => (
										<PropRow key={name} $tone={tone}>
											<th scope='row'>{name}</th>
											<td>{value}</td>
										</PropRow>
									))}
									<Section title='图幅设置' dark />
									{sheetProps.map(({ name, value }) => (
										<PropRow key={name} $tone='off'>
											<th scope='row'>{name}</th>
											<td>{value}</td>
										</PropRow>
									))}
								</tbody>
							</PropTable>
							<SheetFiller />
							<HelpBox />
						</PropertySheet>
					</Panel>

					<Splitter />

					<Workspace>
						<FileTabs>
							{files.map((name, i) => (
								<FileTab
									key={name}
									type='button'
									$active={name === file}
									$slant={i === 0 || name === file}
									onClick={() => setFile(name)}
								>
									<FileTabText>
										{name}
										{name === file && (
											<Icon w={9}>
												<path d='M1 1l7 7M8 1L1 8' stroke='#666' strokeWidth='1.400' />
											</Icon>
										)}
									</FileTabText>
								</FileTab>
							))}
						</FileTabs>
						<Drawing />
						<LayoutTabs>
							{['M1.500 1v7M7 1v7L3 4.500z', 'M6 1v7L2 4.500z', 'M3 1v7l4-3.500z', 'M2 1v7l4-3.500zM7.500 1v7'].map((d, i) => (
								<PageButton key={d} type='button' aria-label={['首页', '上一页', '下一页', '末页'][i]}>
									<Icon w={9}>
										<path d={d} fill='#666' stroke='#666' strokeWidth='.500' />
									</Icon>
								</PageButton>
							))}
							{['模型', '布局1', '布局2'].map((name, i) => (
								<LayoutTab
									key={name}
									type='button'
									$width={i === 0 ? 48 : 52}
									$active={name === layout}
									onClick={() => setLayout(name)}
								>
									<span>{name}</span>
								</LayoutTab>
							))}
						</LayoutTabs>
					</Workspace>
				</Body>

				<BottomBar />
				<CommandRow>命令行</CommandRow>
				<Watermark>CSDN @biyezuopinvip</Watermark>
			</Page>
		</>
	)
}

export default App
